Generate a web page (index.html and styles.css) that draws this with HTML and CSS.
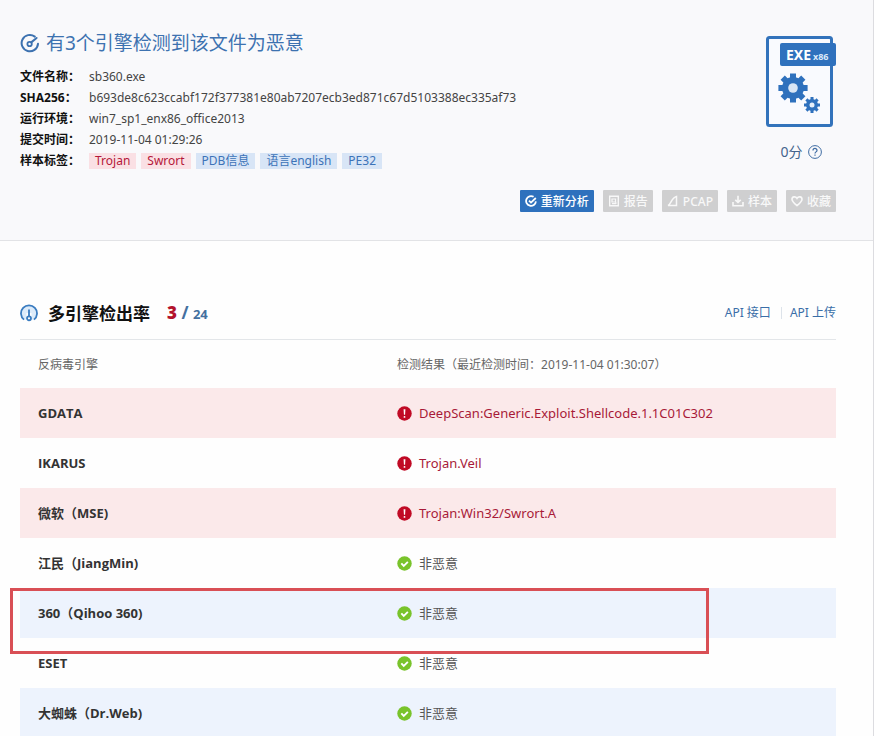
FILE: index.html
```html
<!DOCTYPE html>
<html lang="zh-CN">
<head>
<meta charset="utf-8">
<title>sb360.exe</title>
<link rel="stylesheet" href="styles.css">
</head>
<body>
<svg class="defs" aria-hidden="true">
  <symbol id="scan" viewBox="0 0 20 20">
    <path d="M14.800 3.600A8.200 8.200 0 1 0 18 10.800" fill="none" stroke="currentColor" stroke-width="2" stroke-linecap="round"/>
    <circle cx="9.600" cy="11" r="2.200" fill="none" stroke="currentColor" stroke-width="1.800"/>
    <path d="M11.200 9.400 16.600 5" stroke="currentColor" stroke-width="2" stroke-linecap="round"/>
  </symbol>
  <symbol id="scan-small" viewBox="0 0 12 12">
    <path d="M8.600 1.800A4.900 4.900 0 1 0 10.900 6.400M4 5.700 6 7.600 10.800 3" fill="none" stroke="currentColor" stroke-width="1.800"/>
  </symbol>
  <symbol id="alert" viewBox="0 0 16 16">
    <circle cx="8" cy="8" r="7.7" fill="#c00a25"/>
    <path d="M7 3.4h2l-.4 5.8H7.4z" fill="#fff"/>
    <circle cx="8" cy="11.6" r="1" fill="#fff"/>
  </symbol>
  <symbol id="ok" viewBox="0 0 16 16">
    <circle cx="8" cy="8" r="7.7" fill="#79c32b"/>
    <path d="m4.6 7.8 2.6 2.7 4.4-4.3" fill="none" stroke="#fff" stroke-width="2"/>
  </symbol>
</svg>
<div class="page">
  <header class="summary">
    <div class="summary-top">
      <div class="details">
        <h1><svg class="title-icon"><use href="#scan"/></svg>有3个引擎检测到该文件为恶意</h1>
        <dl>
          <dt>文件名称：</dt><dd>sb360.exe</dd>
          <dt>SHA256：</dt><dd>b693de8c623ccabf172f377381e80ab7207ecb3ed871c67d5103388ec335af73</dd>
          <dt>运行环境：</dt><dd>win7_sp1_enx86_office2013</dd>
          <dt>提交时间：</dt><dd>2019-11-04 01:29:26</dd>
          <dt>样本标签：</dt>
          <dd class="tags"><span class="tag bad">Trojan</span><span class="tag bad">Swrort</span><span class="tag">PDB信息</span><span class="tag">语言english</span><span class="tag">PE32</span></dd>
        </dl>
      </div>
      <div class="score">
        <svg class="file-icon" viewBox="0 0 70 91">
          <rect x="1.5" y="1.5" width="64" height="88" rx="2" fill="#f9fafe" stroke="#3373bb" stroke-width="3"/>
          <rect x="14" y="7" width="56" height="23" rx="2" fill="#2f71bd"/>
          <text x="20" y="24" class="badge-type">EXE</text>
          <text x="47" y="24" class="badge-arch">x86</text>
          <g fill="#2f71bd" stroke="#2f71bd">
            <circle cx="27" cy="52" r="11" stroke="none"/>
            <path stroke-width="6" d="M27 37.400v29.200M12.400 52h29.200M16.700 41.700l20.600 20.600M37.300 41.700 16.700 62.300"/>
            <circle cx="46" cy="69" r="6" stroke="none"/>
            <path stroke-width="3" d="M46 61v16M38 69h16M40.400 63.400l11.200 11.200M51.600 63.400 40.400 74.600"/>
          </g>
          <circle cx="27" cy="52" r="4.800" fill="#d9e6f5"/>
          <circle cx="46" cy="69" r="2.500" fill="#e6effa"/>
        </svg>
        <p>0分
          <svg class="help" viewBox="0 0 14 14" fill="none" stroke="currentColor"><circle cx="7" cy="7" r="6.400"/><path stroke-width="1.200" d="M5 5.500c0-2.700 4-2.700 4-.1 0 1.500-2 1.500-2 3.100M7 9.500v1.300"/></svg>
        </p>
      </div>
    </div>
    <div class="actions">
      <button class="primary"><svg><use href="#scan-small"/></svg>重新分析</button>
      <button><svg viewBox="0 0 12 12" fill="none" stroke="currentColor"><path stroke-width="1.400" d="M1.700 1.200h8.600v9.600H1.700z"/><path stroke-width="1.200" d="M4 4h3.500v3H4zM4 8.600h4M7 6.500l1.500 2"/></svg>报告</button>
      <button><svg viewBox="0 0 12 12" fill="none" stroke="currentColor" stroke-width="1.500"><path d="M1 10.500C4 9.500 4.500 2.500 9.500 1.400v9.100z"/></svg>PCAP</button>
      <button><svg viewBox="0 0 12 12" fill="none" stroke="currentColor" stroke-width="1.600"><path d="M6 .8v6.400M3.300 4.800 6 7.400l2.700-2.600M1 7v3.800h10V7"/></svg>样本</button>
      <button><svg viewBox="0 0 12 12" fill="none" stroke="currentColor" stroke-width="1.600"><path d="M6 10.600C3 8.200 1 6.500 1 4.300 1 1.500 4.600 1 6 3.400 7.400 1 11 1.500 11 4.300c0 2.200-2 3.900-5 6.300z"/></svg>收藏</button>
    </div>
  </header>
  <main class="engines">
    <div class="engines-head">
      <svg class="gauge" viewBox="0 0 18 18" fill="none" stroke="#3a7cc0"><path fill="#dcebfa" stroke-width="1.800" d="M4 15.600A8 8 0 1 1 14 15.600"/><path stroke="#fff" stroke-width="5" d="M9 9v8"/><path stroke-width="1.800" d="M9 5.500v7"/><circle cx="9" cy="14.300" r="2" stroke-width="1.800"/></svg>
      <h2>多引擎检出率</h2>
      <p class="rate"><b>3</b> / <small>24</small></p>
      <nav><a href="#api">API 接口</a><a href="#upload">API 上传</a></nav>
    </div>
    <table>
      <thead><tr><th>反病毒引擎</th><th>检测结果（最近检测时间：2019-11-04 01:30:07）</th></tr></thead>
      <tbody>
        <tr class="hit shaded"><th>GDATA</th><td><svg><use href="#alert"/></svg>DeepScan:Generic.Exploit.Shellcode.1.1C01C302</td></tr>
        <tr class="hit"><th>IKARUS</th><td><svg><use href="#alert"/></svg>Trojan.Veil</td></tr>
        <tr class="hit shaded"><th>微软（MSE)</th><td><svg><use href="#alert"/></svg>Trojan:Win32/Swrort.A</td></tr>
        <tr><th>江民（JiangMin)</th><td><svg><use href="#ok"/></svg>非恶意</td></tr>
        <tr class="shaded marked"><th>360（Qihoo 360)</th><td><svg><use href="#ok"/></svg>非恶意</td></tr>
        <tr><th>ESET</th><td><svg><use href="#ok"/></svg>非恶意</td></tr>
        <tr class="shaded"><th>大蜘蛛（Dr.Web)</th><td><svg><use href="#ok"/></svg>非恶意</td></tr>
      </tbody>
    </table>
  </main>
</div>
</body>
</html>
```
FILE: styles.css
```css
* { box-sizing: border-box; }
body {
  margin: 0;
  font: 12px/21px "Noto Sans", "Noto Sans CJK SC", sans-serif;
  color: #444;
  background: #fefefe;
}
h1, h2, p, dl, dd { margin: 0; }
a { color: #3a6ea8; text-decoration: none; }
.defs { position: absolute; width: 0; height: 0; }
.page {
  height: 100vh;
  overflow: hidden;
  border-right: 1px solid #dcdce0;
}

.summary {
  padding: 30px 37px 28px 20px;
  background: #f9f9fb;
  border-bottom: 1px solid #e2e3e6;
}
.summary-top { display: flex; justify-content: space-between; }
h1 {
  display: flex;
  align-items: center;
  gap: 6px;
  margin-bottom: 10px;
  font-size: 19px;
  line-height: 26px;
  font-weight: 400;
  color: #3d72b0;
}
.title-icon { width: 20px; height: 20px; }
dl { display: grid; grid-template-columns: 69px auto; }
dt { font-weight: 700; color: #111; white-space: nowrap; }
.tags { display: flex; align-items: center; gap: 5px; }
.tag {
  padding: 0 6px;
  line-height: 16px;
  color: #3c73b8;
  background: #d8e5f6;
}
.tag.bad { color: #b5173a; background: #fae0e4; }

.score { padding-top: 6px; font-size: 14px; color: #44648c; }
.score p {
  display: flex;
  align-items: center;
  justify-content: center;
  gap: 5px;
  margin-top: 14px;
}
.file-icon { display: block; width: 70px; height: 91px; }
.help { width: 14px; height: 14px; color: #3f6ca3; }
.badge-type { font-size: 14px; font-weight: 700; fill: #fff; }
.badge-arch { font-size: 9px; font-weight: 700; fill: #dbe9fa; }

.actions {
  display: flex;
  justify-content: flex-end;
  gap: 9px;
  margin-top: 19px;
}
button {
  display: flex;
  align-items: center;
  gap: 4px;
  height: 22px;
  padding: 0 5px;
  border: 0;
  border-radius: 1px;
  font: inherit;
  font-weight: 500;
  color: #f8f8f8;
  background: #cfcfd0;
}
button svg { width: 12px; height: 12px; }
button.primary { color: #fff; background: #2e71bd; }

.engines { padding: 59px 37px 0 20px; }
.engines-head {
  display: flex;
  align-items: center;
  height: 40px;
  padding-bottom: 13px;
  border-bottom: 1px solid #e3e6e9;
}
.gauge { width: 18px; height: 18px; margin-right: 10px; }
h2 { font-size: 17px; color: #111; }
.rate { margin-left: 17px; font-size: 17px; font-weight: 700; color: #44709f; }
.rate b { color: #b3122c; }
.rate small { font-size: 13px; }
nav { margin-left: auto; display: flex; align-items: center; line-height: 12px; }
nav a + a { margin-left: 10px; padding-left: 8px; border-left: 1px solid #dde3ea; }

table { width: 100%; table-layout: fixed; border-collapse: collapse; font-size: 13px; color: #555; }
th, td { height: 50px; padding: 0 18px; text-align: left; }
th:first-child { width: 44%; }
thead th { height: 48px; font-size: 12px; font-weight: 400; color: #666; }
tbody th { font-family: "Open Sans", "Noto Sans CJK SC", sans-serif; color: #333; }
td svg { width: 15px; height: 15px; margin-right: 7px; vertical-align: -3px; }
.shaded { background: #edf3fd; }
.hit td { color: #a81a38; }
.hit.shaded { background: #fbe9ea; }
.marked { position: relative; }
.marked th::after {
  content: "";
  position: absolute;
  inset: 0 127px -16px -10px;
  border: 3px solid #d94f55;
}
```
